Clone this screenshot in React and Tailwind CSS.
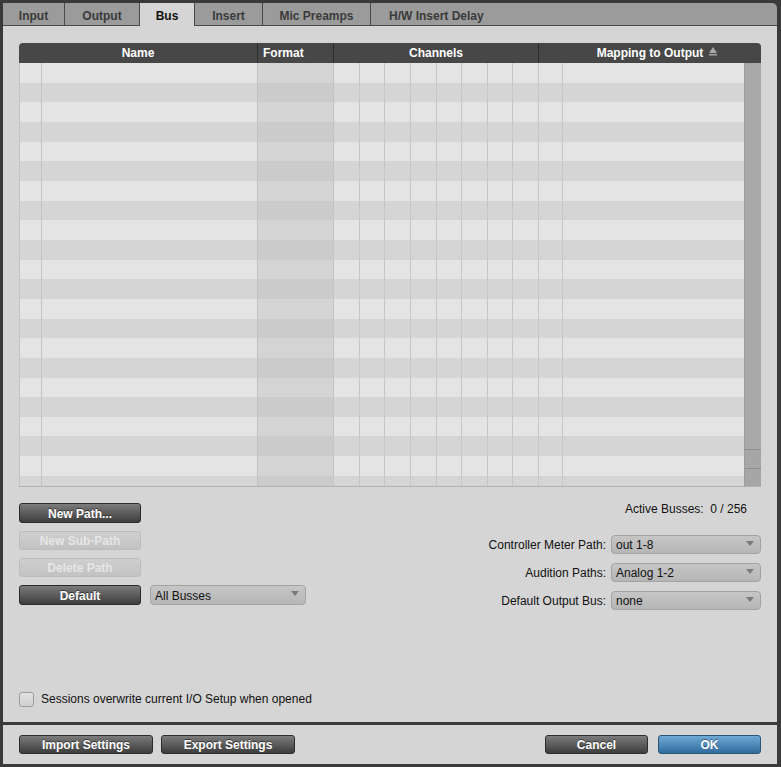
import React from "react";

const FONT = { fontFamily: '"Liberation Sans", Arial, Helvetica, sans-serif' };

function Tab({ label, w, active, last }) {
  if (active) {
    return (
      <div className={`${w} h-full flex items-center justify-center pt-[3px] bg-[#d5d5d5] text-[#111] font-bold text-[12px] border-r border-[#4a4a4a]`}>
        {label}
      </div>
    );
  }
  return (
    <div
      className={`${w} h-full flex items-center pt-[3px] bg-[#9b9b9b] text-[#3a3a3a] font-bold text-[12px] border-b border-[#4a4a4a] ${
        last ? "justify-start pl-[18px] rounded-tr-[5px]" : "justify-center border-r"
      }`}
    >
      {label}
    </div>
  );
}

function DarkButton({ label, w = "w-[122px]", h = "h-[20px]" }) {
  return (
    <div
      className={`${w} ${h} flex items-center justify-center pt-[1px] rounded-[3px] border border-[#2c2c2c] bg-gradient-to-b from-[#7c7c7c] to-[#3e3e3e] text-white font-bold text-[12px] [text-shadow:0_-1px_0_rgba(0,0,0,0.5)]`}
    >
      {label}
    </div>
  );
}

function DisabledButton({ label }) {
  return (
    <div className="w-[122px] h-[19px] flex items-center justify-center pt-[1px] rounded-[3px] border border-[#bcbcbc] bg-gradient-to-b from-[#cfcfcf] to-[#c2c2c2] text-[#e6e6e6] font-bold text-[12px]">
      {label}
    </div>
  );
}

function Arrow() {
  return (
    <svg width="8" height="5" viewBox="0 0 8 5" className="absolute right-[6px] top-[5px]">
      <polygon points="0,0 8,0 4,5" fill="#7a7a7a" />
    </svg>
  );
}

function Dropdown({ value, w = "w-[150px]", h = "h-[19px]" }) {
  return (
    <div
      className={`relative ${w} ${h} flex items-center pl-[4px] pt-[1px] rounded-[4px] border border-[#a2a2a2] bg-gradient-to-b from-[#c6c6c6] to-[#b6b6b6] text-[#111] text-[12px]`}
    >
      {value}
      <Arrow />
    </div>
  );
}

function SortIcon() {
  return (
    <svg width="8" height="9" viewBox="0 0 8 9" className="absolute left-full ml-[6px] top-[3px]">
      <polygon points="4,0 8,6 0,6" fill="#a8a8a8" />
      <rect x="0" y="7" width="8" height="1.5" fill="#a8a8a8" />
    </svg>
  );
}

const ROWS = Array.from({ length: 22 }, (_, i) => i);
const CH = Array.from({ length: 8 }, (_, i) => i);

export default function App() {
  return (
    <div
      style={FONT}
      className="w-[781px] h-[767px] bg-[#3a3a3a] pt-[3px] pl-[3px] pr-[4px] pb-[3px] flex flex-col overflow-hidden"
    >
      {/* Tabs */}
      <div className="flex h-[23px] shrink-0">
        <Tab label="Input" w="w-[62px]" />
        <Tab label="Output" w="w-[75px]" />
        <Tab label="Bus" w="w-[55px]" active />
        <Tab label="Insert" w="w-[68px]" />
        <Tab label="Mic Preamps" w="w-[108px]" />
        <Tab label="H/W Insert Delay" w="flex-1" last />
      </div>

      {/* Panel */}
      <div className="h-[696px] shrink-0 bg-[#d5d5d5] px-[16px] pt-[17px] pb-[14px] flex flex-col">
        {/* Table */}
        <div className="w-[742px]">
          <div className="h-[20px] rounded-t-[4px] bg-[#474747] grid grid-cols-[239px_76px_205px_minmax(0,1fr)] text-white font-bold text-[12px]">
            <div className="flex items-center justify-center border-r border-[#2e2e2e]">Name</div>
            <div className="flex items-center pl-[5px] border-r border-[#2e2e2e]">Format</div>
            <div className="flex items-center justify-center border-r border-[#2e2e2e]">Channels</div>
            <div className="flex items-center justify-center">
              <span className="relative">
                Mapping to Output
                <SortIcon />
              </span>
            </div>
          </div>
          <div className="flex h-[424px] border-b border-[#b2b2b2]">
            <div className="w-[725px] h-[423px] overflow-hidden border-l border-[#c4c4c4]">
              {ROWS.map((r) => {
                const light = r % 2 === 0;
                return (
                  <div
                    key={r}
                    className={`h-[19.67px] grid grid-cols-[22px_216px_76px_repeat(8,minmax(0,1fr))_24px_181px] ${
                      light ? "bg-[#e4e4e4]" : "bg-[#d5d5d5]"
                    }`}
                  >
                    <div className="border-r border-[#c2c2c2]" />
                    <div className="border-r border-[#c2c2c2]" />
                    <div className={`border-r border-[#c2c2c2] ${light ? "bg-[#d4d4d4]" : "bg-[#cbcbcb]"}`} />
                    {CH.map((c) => (
                      <div key={c} className="border-r border-[#c6c6c6]" />
                    ))}
                    <div className="border-r border-[#c6c6c6]" />
                    <div />
                  </div>
                );
              })}
            </div>
            <div className="w-[17px] h-[423px] flex flex-col border-l border-[#9c9c9c]">
              <div className="flex-1 bg-[#a9a9a9]" />
              <div className="h-[19px] bg-[#a6a6a6] border-t border-[#8e8e8e]" />
              <div className="h-[18px] bg-[#a6a6a6] border-t border-[#8e8e8e]" />
            </div>
          </div>
        </div>

        {/* Controls */}
        <div className="flex mt-[16px]">
          <div className="flex flex-col gap-[8px]">
            <DarkButton label="New Path..." />
            <DisabledButton label="New Sub-Path" />
            <DisabledButton label="Delete Path" />
            <div className="flex items-center gap-[9px]">
              <DarkButton label="Default" />
              <Dropdown value="All Busses" w="w-[156px]" h="h-[20px]" />
            </div>
          </div>
          <div className="flex-1 flex flex-col items-end">
            <div className="mt-[-1px] h-[14px] leading-[14px] pr-[14px] text-[12px] text-[#111]">
              Active Busses:&nbsp;&nbsp;0 / 256
            </div>
            <div className="mt-[19px] flex flex-col gap-[9px] items-end">
              <div className="flex items-center gap-[5px]">
                <span className="text-[12px] text-[#111]">Controller Meter Path:</span>
                <Dropdown value="out 1-8" />
              </div>
              <div className="flex items-center gap-[5px]">
                <span className="text-[12px] text-[#111]">Audition Paths:</span>
                <Dropdown value="Analog 1-2" />
              </div>
              <div className="flex items-center gap-[5px]">
                <span className="text-[12px] text-[#111]">Default Output Bus:</span>
                <Dropdown value="none" />
              </div>
            </div>
          </div>
        </div>

        {/* Checkbox */}
        <div className="mt-auto flex items-center gap-[7px]">
          <div className="w-[15px] h-[15px] rounded-[3px] border border-[#9c9c9c] bg-gradient-to-b from-[#e2e2e2] to-[#d0d0d0]" />
          <span className="text-[12px] text-[#111]">Sessions overwrite current I/O Setup when opened</span>
        </div>
      </div>

      {/* Footer */}
      <div className="mt-[3px] flex-1 bg-[#d5d5d5] px-[16px] pt-[10px] flex">
        <div className="flex gap-[8px]">
          <DarkButton label="Import Settings" w="w-[134px]" h="h-[19px]" />
          <DarkButton label="Export Settings" w="w-[134px]" h="h-[19px]" />
        </div>
        <div className="ml-auto flex gap-[10px]">
          <DarkButton label="Cancel" w="w-[103px]" h="h-[19px]" />
          <div className="w-[103px] h-[19px] flex items-center justify-center pt-[1px] rounded-[3px] border border-[#2a5678] bg-gradient-to-b from-[#6fa9d6] to-[#2f6d9e] text-white font-bold text-[12px] [text-shadow:0_-1px_0_rgba(0,0,0,0.4)]">
            OK
          </div>
        </div>
      </div>
    </div>
  );
}
